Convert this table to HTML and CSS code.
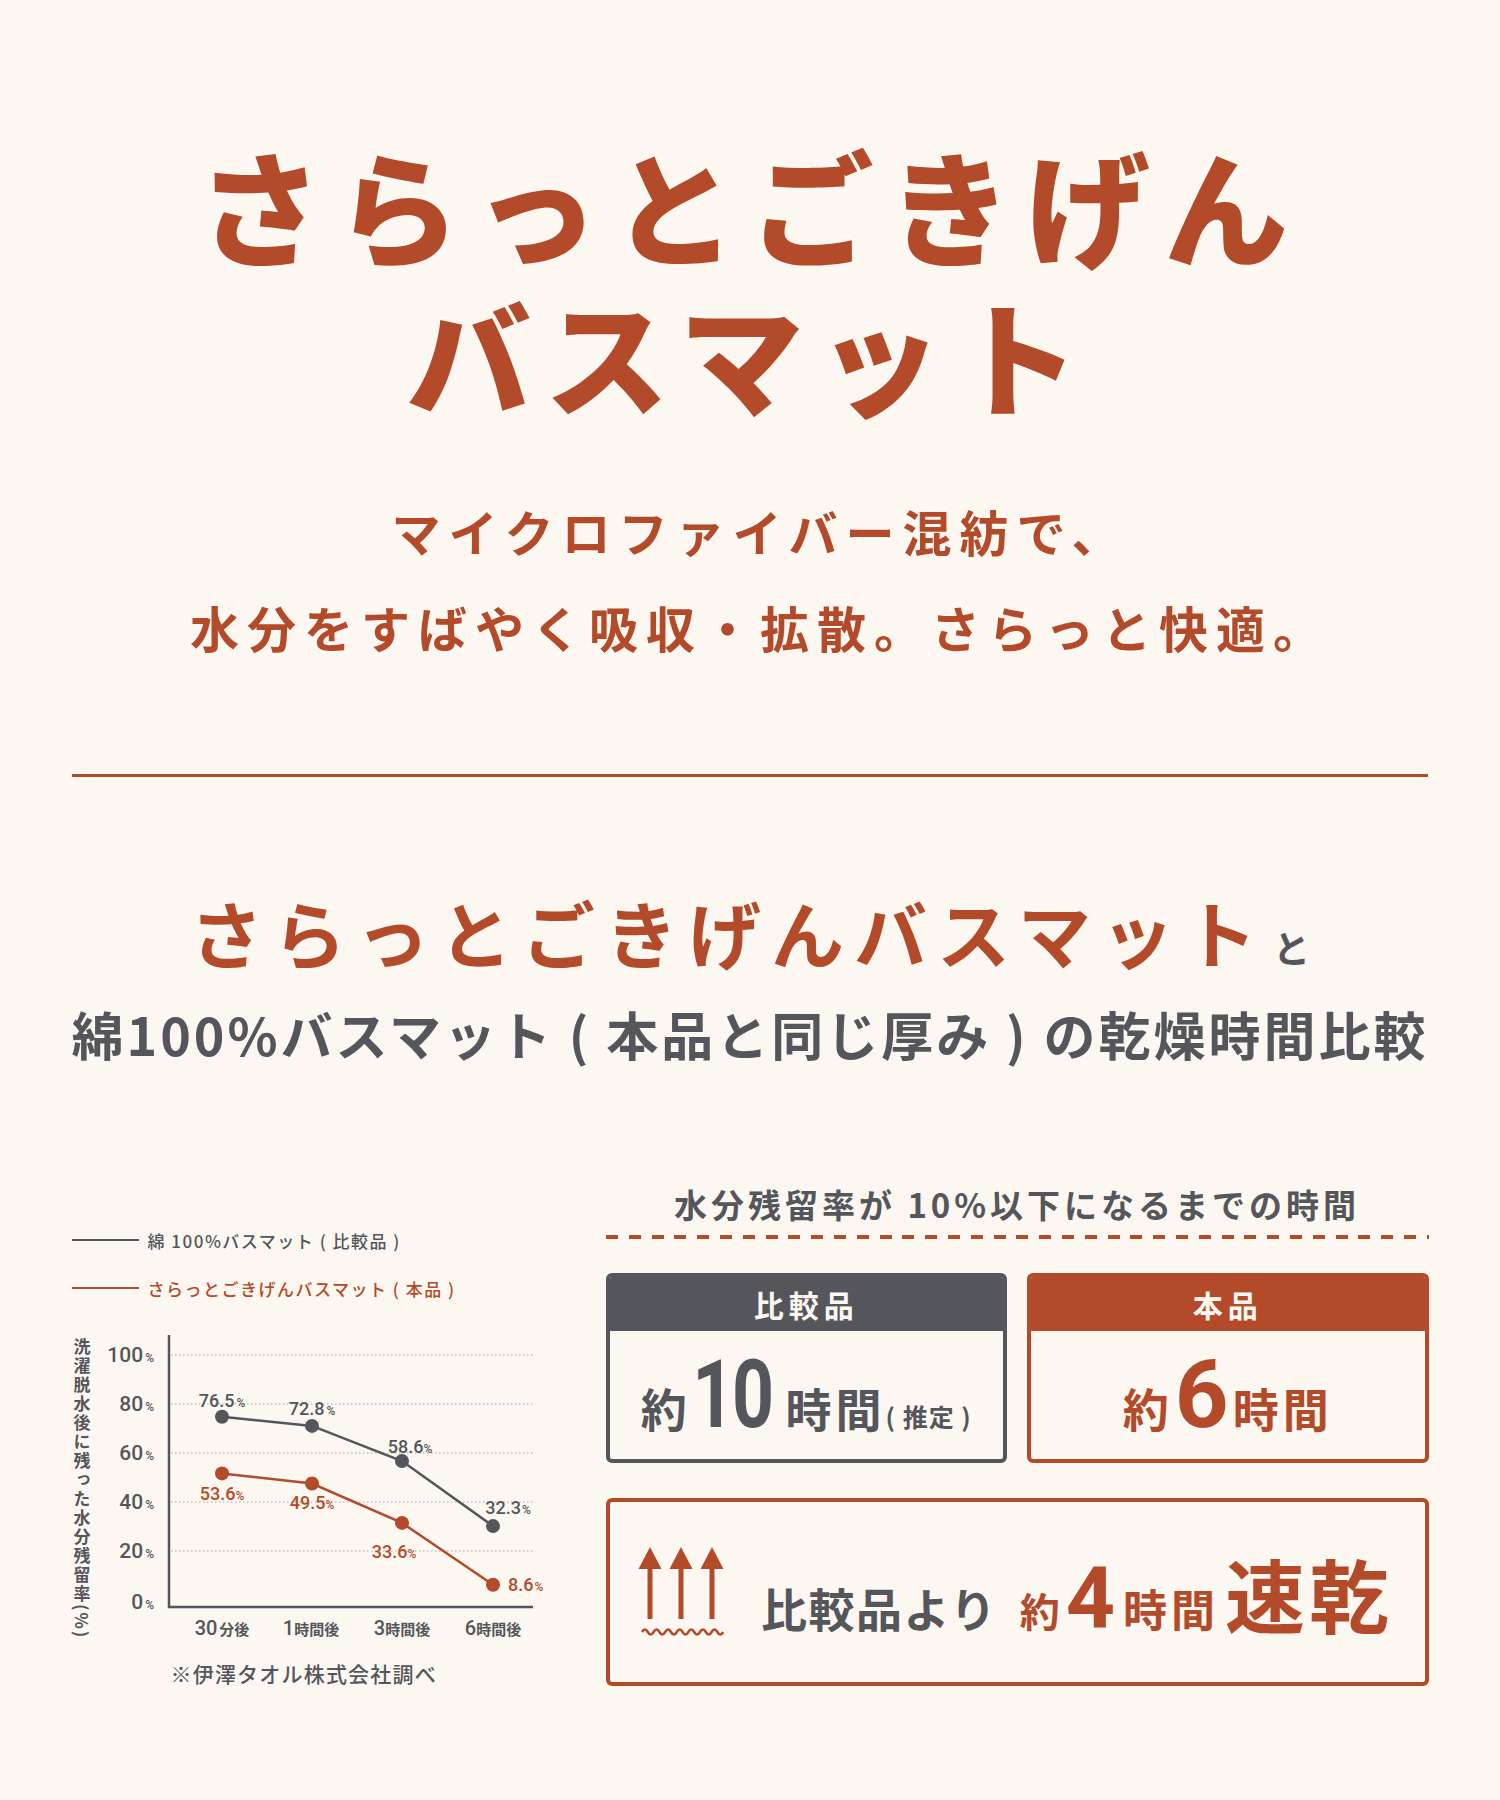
FILE: index.html
```html
<!DOCTYPE html>
<html lang="ja">
<head>
<meta charset="utf-8">
<title>さらっとごきげんバスマット</title>
<link rel="stylesheet" href="styles.css">
</head>
<body>
<main class="page">
  <header class="hero">
    <h1 class="hero-title"><span class="hero-line">さらっとごきげん</span><span class="hero-line">バスマット</span></h1>
    <p class="hero-lead">マイクロファイバー混紡で、<br>水分をすばやく吸収・拡散。さらっと快適。</p>
  </header>

  <hr class="rule">

  <section class="compare">
    <h2 class="compare-heading">
      <span class="compare-line1"><span class="hl">さらっとごきげんバスマット</span><span class="to">と</span></span>
      <span class="compare-line2">綿100%バスマット ( 本品と同じ厚み ) の乾燥時間比較</span>
    </h2>

    <div class="compare-body">
      <div class="chart-col">
        <ul class="legend">
          <li class="legend-gray"><span class="swatch"></span>綿 100%バスマット ( 比較品 )</li>
          <li class="legend-orange"><span class="swatch"></span>さらっとごきげんバスマット ( 本品 )</li>
        </ul>

        <svg class="chart" viewBox="0 0 534 335" width="534" height="335">
          <text class="axis-title" x="10" y="18">洗濯脱水後に残った水分残留率(%)</text>

          <g class="grid">
            <line x1="99" y1="35" x2="461" y2="35"/>
            <line x1="99" y1="84" x2="461" y2="84"/>
            <line x1="99" y1="133" x2="461" y2="133"/>
            <line x1="99" y1="182" x2="461" y2="182"/>
            <line x1="99" y1="231" x2="461" y2="231"/>
          </g>
          <line class="axis" x1="97" y1="15" x2="97" y2="288"/>
          <line class="axis" x1="96" y1="287" x2="461" y2="287"/>

          <g class="ylabels">
            <text x="82" y="42">100<tspan class="pct" dx="2">%</tspan></text>
            <text x="82" y="91">80<tspan class="pct" dx="2">%</tspan></text>
            <text x="82" y="140">60<tspan class="pct" dx="2">%</tspan></text>
            <text x="82" y="189">40<tspan class="pct" dx="2">%</tspan></text>
            <text x="82" y="238">20<tspan class="pct" dx="2">%</tspan></text>
            <text x="82" y="289">0<tspan class="pct" dx="2">%</tspan></text>
          </g>

          <polyline class="series series-gray" points="150,96.7 240,105.9 330,141 421,206.1"/>
          <g class="dots dots-gray">
            <circle cx="150" cy="96.7" r="7"/>
            <circle cx="240" cy="105.9" r="7"/>
            <circle cx="330" cy="141" r="7"/>
            <circle cx="421" cy="206.1" r="7"/>
          </g>
          <polyline class="series series-orange" points="150,153.4 240,163.5 330,202.9 421,264.7"/>
          <g class="dots dots-orange">
            <circle cx="150" cy="153.4" r="7"/>
            <circle cx="240" cy="163.5" r="7"/>
            <circle cx="330" cy="202.9" r="7"/>
            <circle cx="421" cy="264.7" r="7"/>
          </g>

          <g class="vlabels vlabels-gray">
            <text x="150" y="86.5">76.5<tspan class="pct" dx="2">%</tspan></text>
            <text x="240" y="94.5">72.8<tspan class="pct" dx="2">%</tspan></text>
            <text x="338" y="132.5">58.6<tspan class="pct">%</tspan></text>
            <text x="436" y="193.5">32.3<tspan class="pct" dx="1">%</tspan></text>
          </g>
          <g class="vlabels vlabels-orange">
            <text x="150" y="179.5">53.6<tspan class="pct">%</tspan></text>
            <text x="240" y="188.5">49.5<tspan class="pct">%</tspan></text>
            <text x="322" y="237.5">33.6<tspan class="pct">%</tspan></text>
            <text class="start" x="436" y="270.5">8.6<tspan class="pct" dx="1">%</tspan></text>
          </g>

          <g class="xlabels">
            <text x="150" y="315">30<tspan class="unit" dx="2">分後</tspan></text>
            <text x="239" y="315">1<tspan class="unit">時間後</tspan></text>
            <text x="330" y="315">3<tspan class="unit">時間後</tspan></text>
            <text x="421" y="315">6<tspan class="unit">時間後</tspan></text>
          </g>
        </svg>

        <p class="note">※伊澤タオル株式会社調べ</p>
      </div>

      <div class="result-col">
        <h3 class="result-title">水分残留率が 10%以下になるまでの時間</h3>
        <div class="dash"></div>

        <div class="cards">
          <div class="card card-gray">
            <div class="card-head">比較品</div>
            <div class="card-body">
              <span class="val"><span class="val-pre">約</span><span class="num num-2">10</span><span class="val-unit">時間</span><span class="val-note">( 推定 )</span></span>
            </div>
          </div>
          <div class="card card-orange">
            <div class="card-head">本品</div>
            <div class="card-body">
              <span class="val"><span class="val-pre">約</span><span class="num">6</span><span class="val-unit">時間</span></span>
            </div>
          </div>
        </div>

        <div class="summary">
          <svg class="steam" viewBox="0 0 82 90" width="82" height="90" aria-hidden="true">
            <g class="steam-arrows">
              <polygon points="9,0 20.5,22 -2.5,22"/>
              <rect x="6.5" y="20" width="5" height="52"/>
              <polygon points="40,0 51.5,22 28.5,22"/>
              <rect x="37.5" y="20" width="5" height="52"/>
              <polygon points="71,0 82.5,22 59.5,22"/>
              <rect x="68.5" y="20" width="5" height="52"/>
            </g>
            <path class="steam-wave" d="M1,85 q2.9,-5 5.8,0 t5.8,0 t5.8,0 t5.8,0 t5.8,0 t5.8,0 t5.8,0 t5.8,0 t5.8,0 t5.8,0 t5.8,0 t5.8,0 t5.8,0 t5.8,0"/>
          </svg>
          <p class="sum-text"><span class="sum-lead">比較品より</span><span class="sum-pre">約</span><span class="num sum-num">4</span><span class="sum-unit">時間</span><span class="sum-big">速乾</span></p>
        </div>
      </div>
    </div>
  </section>
</main>
</body>
</html>
```

FILE: styles.css
```css
html, body {
  margin: 0;
  padding: 0;
  background: #fcf8f1;
}

body {
  font-family: "Noto Sans CJK JP", "Noto Sans", sans-serif;
  color: #54565b;
}

.page {
  width: 1500px;
  min-height: 1800px;
  padding-top: 128px;
  box-sizing: border-box;
}

/* ---------- hero ---------- */
.hero-title {
  margin: 0;
  text-align: center;
  font-size: 124px;
  letter-spacing: 14px;
  font-weight: 900;
  color: #b34a2a;
}

.hero-line {
  display: block;
  height: 150px;
  line-height: 150px;
}

.hero-lead {
  margin: 55px 0 0;
  padding-left: 20px;
  text-align: center;
  font-size: 49px;
  line-height: 96px;
  letter-spacing: 8px;
  font-weight: 700;
  color: #b34a2a;
}

.rule {
  display: block;
  margin: 99px auto 0;
  width: 1356px;
  height: 3px;
  border: 0;
  background: #b34a2a;
}

/* ---------- comparison heading ---------- */
.compare-heading {
  margin: 104px 0 0;
  text-align: center;
  font-weight: 700;
}

.compare-line1 {
  display: block;
  height: 100px;
  font-size: 73px;
  line-height: 100px;
}

.hl {
  letter-spacing: 10px;
  color: #b34a2a;
}

.to {
  font-size: 37px;
  line-height: 1;
  margin-left: 6px;
  color: #54565b;
}

.compare-line2 {
  display: block;
  margin-top: 13px;
  font-size: 52px;
  line-height: 80px;
  letter-spacing: 3px;
  color: #54565b;
}

/* ---------- comparison body ---------- */
.compare-body {
  display: grid;
  grid-template-columns: 534px 823px;
  width: 1357px;
  margin: 108px auto 0;
}

.chart-col {
  padding-top: 46px;
}

.legend {
  list-style: none;
  margin: 0;
  padding: 0;
  display: flex;
  flex-direction: column;
  gap: 24px;
}

.legend li {
  display: flex;
  align-items: center;
  gap: 9px;
  height: 24px;
  font-size: 17px;
  letter-spacing: 1.5px;
  font-weight: 500;
  white-space: nowrap;
}

.legend .swatch {
  width: 67px;
  height: 2px;
  background: currentColor;
  flex: none;
}

.legend-gray { color: #54565b; }
.legend-orange { color: #b34a2a; }

.chart {
  display: block;
  margin-top: 20px;
  overflow: visible;
}

.chart text {
  font-family: Roboto, "Noto Sans CJK JP", sans-serif;
  fill: #54565b;
}

.chart .axis-title {
  font-family: "Noto Sans CJK JP", sans-serif;
  writing-mode: vertical-rl;
  font-size: 17px;
  letter-spacing: 2px;
  font-weight: 700;
}

.grid line {
  stroke: #a7a7a7;
  stroke-width: 1;
  stroke-dasharray: 1.5 2.5;
}

.axis {
  stroke: #54565b;
  stroke-width: 2.5;
}

.ylabels text {
  text-anchor: end;
  font-size: 21px;
  font-weight: 500;
}

.chart .pct {
  font-size: 12px;
}

.series {
  fill: none;
  stroke-width: 2.5;
}

.series-gray { stroke: #54565b; }
.series-orange { stroke: #b34a2a; }
.dots-gray circle { fill: #54565b; }
.dots-orange circle { fill: #b34a2a; }

.vlabels text {
  text-anchor: middle;
  font-size: 18px;
  font-weight: 500;
}

.vlabels text.start {
  text-anchor: start;
}

.chart .vlabels-orange text {
  fill: #b34a2a;
}

.xlabels text {
  text-anchor: middle;
  font-size: 20px;
  font-weight: 500;
}

.chart .unit {
  font-family: "Noto Sans CJK JP", sans-serif;
  font-size: 15px;
  font-weight: 700;
}

.note {
  margin: 4px 0 0 99px;
  font-size: 21px;
  line-height: 28px;
  letter-spacing: 1.2px;
  font-weight: 500;
}

/* ---------- results ---------- */
.result-title {
  margin: 0;
  text-align: center;
  font-size: 33px;
  line-height: 44px;
  letter-spacing: 4px;
  font-weight: 700;
}

.dash {
  margin-top: 9px;
  height: 4px;
  background: repeating-linear-gradient(to right, #b34a2a 0 12px, transparent 12px 22.8px);
}

.cards {
  margin-top: 34px;
  display: grid;
  grid-template-columns: 1fr 1fr;
  gap: 20px;
}

.card {
  border: 4px solid;
  border-radius: 6px;
  overflow: hidden;
}

.card-gray { border-color: #54565b; color: #54565b; }
.card-orange { border-color: #b34a2a; color: #b34a2a; }

.card-head {
  height: 54px;
  display: flex;
  align-items: center;
  justify-content: center;
  font-size: 30px;
  letter-spacing: 5px;
  font-weight: 700;
  color: #fcf8f1;
}

.card-gray .card-head { background: #54565b; }
.card-orange .card-head { background: #b34a2a; }

.card-body {
  height: 128px;
  display: flex;
  align-items: center;
  justify-content: center;
}

.val {
  font-size: 46px;
  line-height: 1;
  font-weight: 700;
  white-space: nowrap;
}

.val-pre {
  margin-right: 6px;
}

.num {
  font-family: Roboto, "Noto Sans", sans-serif;
  font-weight: 700;
  font-size: 94px;
  line-height: 1;
  letter-spacing: -3px;
}

.num-2 {
  display: inline-block;
  transform: scaleX(0.78);
  margin: 0 -4px 0 -12px;
}

.val-unit {
  margin-left: 7px;
  letter-spacing: 4px;
}

.val-note {
  font-size: 25px;
  letter-spacing: 1px;
}

.summary {
  margin-top: 35px;
  height: 180px;
  border: 4px solid #b34a2a;
  border-radius: 6px;
  display: flex;
  align-items: center;
  justify-content: center;
  gap: 38px;
}

.steam {
  display: block;
  overflow: visible;
  flex: none;
}

.steam-arrows { fill: #b34a2a; }

.steam-wave {
  fill: none;
  stroke: #b34a2a;
  stroke-width: 2.5;
}

.sum-text {
  margin: 0;
  padding-top: 8px;
  font-weight: 700;
  line-height: 1;
  white-space: nowrap;
  color: #b34a2a;
}

.sum-lead {
  font-size: 46px;
  letter-spacing: 1.5px;
  color: #54565b;
  margin-right: 22px;
}

.sum-pre {
  font-size: 40px;
  margin-right: 6px;
}

.sum-num {
  font-size: 86px;
  letter-spacing: 0;
}

.sum-unit {
  font-size: 44px;
  letter-spacing: 4px;
  margin-left: 8px;
}

.sum-big {
  font-size: 80px;
  letter-spacing: 4px;
  margin-left: 6px;
}
```
